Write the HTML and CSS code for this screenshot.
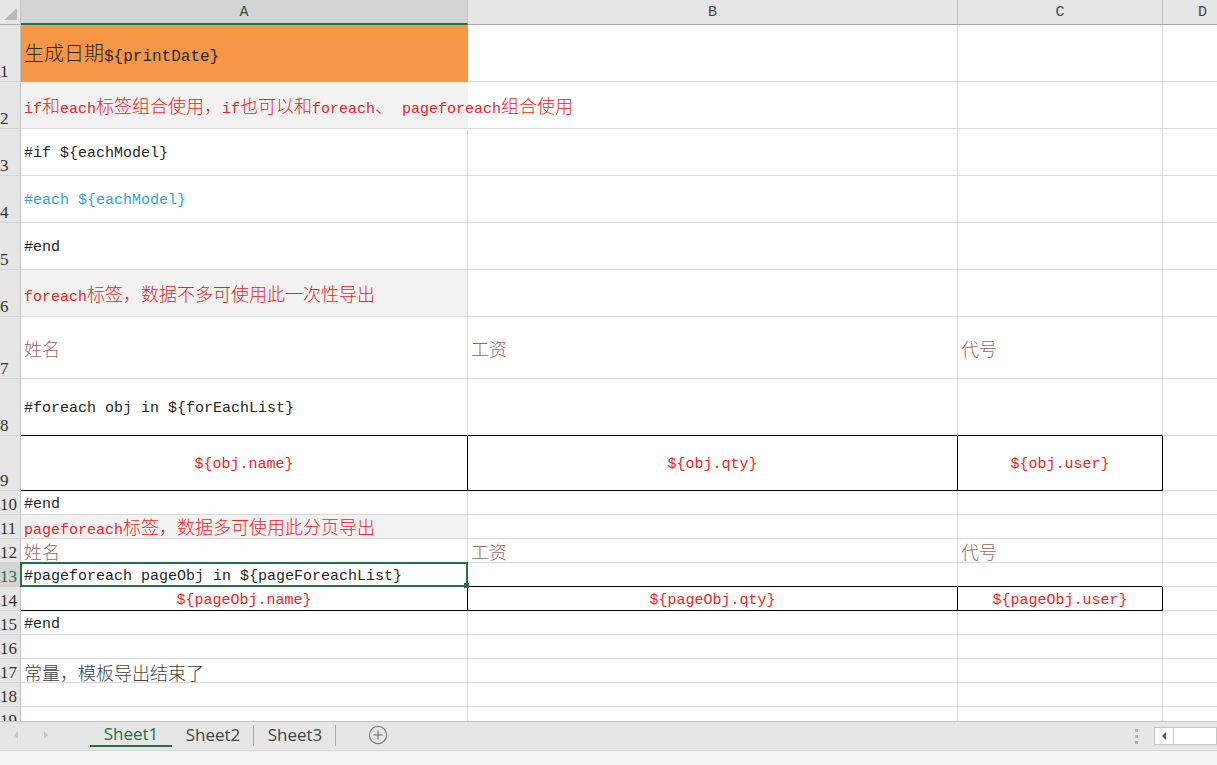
FILE: index.html
```html
<!DOCTYPE html>
<html lang="zh-CN">
<head>
<meta charset="utf-8">
<title>Sheet1</title>
<link rel="stylesheet" href="styles.css">
</head>
<body>
<div class="app">
  <div class="sheet">
    <div class="corner"><svg width="20" height="24" viewBox="0 0 20 24"><polygon points="4,20 17,20 17,8" fill="#b9b9b9"/></svg></div>
    <div class="ch sel">A</div>
    <div class="ch">B</div>
    <div class="ch">C</div>
    <div class="ch">D</div>

    <div class="rh">1</div>
    <div class="c big orange"><span><span class="z">生成日期</span>${printDate}</span></div>
    <div class="c"></div><div class="c"></div><div class="c"></div>

    <div class="rh">2</div>
    <div class="c red gray nor"><span>if<span class="z">和</span>each<span class="z">标签组合使用，</span>if<span class="z">也可以和</span>foreach<span class="z">、</span> pageforeach<span class="z">组合使用</span></span></div>
    <div class="c"></div><div class="c"></div><div class="c"></div>

    <div class="rh">3</div>
    <div class="c"><span>#if ${eachModel}</span></div>
    <div class="c"></div><div class="c"></div><div class="c"></div>

    <div class="rh">4</div>
    <div class="c cyan"><span>#each ${eachModel}</span></div>
    <div class="c"></div><div class="c"></div><div class="c"></div>

    <div class="rh">5</div>
    <div class="c"><span>#end</span></div>
    <div class="c"></div><div class="c"></div><div class="c"></div>

    <div class="rh">6</div>
    <div class="c red gray"><span>foreach<span class="z">标签，数据不多可使用此一次性导出</span></span></div>
    <div class="c"></div><div class="c"></div><div class="c"></div>

    <div class="rh">7</div>
    <div class="c brown"><span class="z">姓名</span></div>
    <div class="c brown"><span class="z">工资</span></div>
    <div class="c brown"><span class="z">代号</span></div>
    <div class="c"></div>

    <div class="rh">8</div>
    <div class="c bb"><span>#foreach obj in ${forEachList}</span></div>
    <div class="c bb"></div><div class="c bb"></div><div class="c"></div>

    <div class="rh">9</div>
    <div class="c bk ctr red"><span>${obj.name}</span></div>
    <div class="c bk ctr red"><span>${obj.qty}</span></div>
    <div class="c bk ctr red"><span>${obj.user}</span></div>
    <div class="c"></div>

    <div class="rh">10</div>
    <div class="c"><span>#end</span></div>
    <div class="c"></div><div class="c"></div><div class="c"></div>

    <div class="rh">11</div>
    <div class="c red gray"><span>pageforeach<span class="z">标签，数据多可使用此分页导出</span></span></div>
    <div class="c"></div><div class="c"></div><div class="c"></div>

    <div class="rh">12</div>
    <div class="c brown"><span class="z">姓名</span></div>
    <div class="c brown"><span class="z">工资</span></div>
    <div class="c brown"><span class="z">代号</span></div>
    <div class="c"></div>

    <div class="rh active">13</div>
    <div class="c bb selcell"><span>#pageforeach pageObj in ${pageForeachList}</span></div>
    <div class="c bb"></div><div class="c bb"></div><div class="c"></div>

    <div class="rh">14</div>
    <div class="c bk ctr red"><span>${pageObj.name}</span></div>
    <div class="c bk ctr red"><span>${pageObj.qty}</span></div>
    <div class="c bk ctr red"><span>${pageObj.user}</span></div>
    <div class="c"></div>

    <div class="rh">15</div>
    <div class="c"><span>#end</span></div>
    <div class="c"></div><div class="c"></div><div class="c"></div>

    <div class="rh">16</div>
    <div class="c"></div>
    <div class="c"></div><div class="c"></div><div class="c"></div>

    <div class="rh">17</div>
    <div class="c dark"><span class="z">常量，模板导出结束了</span></div>
    <div class="c"></div><div class="c"></div><div class="c"></div>

    <div class="rh">18</div>
    <div class="c"></div>
    <div class="c"></div><div class="c"></div><div class="c"></div>

    <div class="rh">19</div>
    <div class="c"></div>
    <div class="c"></div><div class="c"></div><div class="c"></div>
  </div>

  <div class="tabbar">
    <div class="nav">
      <svg width="90" height="27" viewBox="0 0 90 27">
        <polygon points="18,9 14,13 18,17" fill="#c6c6c6"/>
        <polygon points="44,9 48,13 44,17" fill="#c6c6c6"/>
      </svg>
    </div>
    <div class="tabs">
      <div class="tab on">Sheet1</div>
      <div class="tab sep">Sheet2</div>
      <div class="tab sep">Sheet3</div>
    </div>
    <div class="add">
      <svg width="20" height="20" viewBox="0 0 20 20">
        <circle cx="10" cy="10" r="8.6" fill="none" stroke="#7d7d7d" stroke-width="1.2"/>
        <line x1="10" y1="5.5" x2="10" y2="14.5" stroke="#7d7d7d" stroke-width="1.3"/>
        <line x1="5.5" y1="10" x2="14.5" y2="10" stroke="#7d7d7d" stroke-width="1.3"/>
      </svg>
    </div>
    <div class="right">
      <div class="dots"><i></i><i></i><i></i></div>
      <div class="hscroll">
        <div class="sbtn"><svg width="6" height="8" viewBox="0 0 6 8"><polygon points="5,0 1,4 5,8" fill="#5a5a5a"/></svg></div>
        <div class="strack"></div>
      </div>
    </div>
  </div>
  <div class="status"></div>
</div>
</body>
</html>
```

FILE: styles.css
```css
* { box-sizing: border-box; }
html, body { margin: 0; padding: 0; }
body {
  width: 1217px;
  height: 765px;
  overflow: hidden;
  background: #f3f3f3;
  font-family: "Liberation Mono", "Noto Sans CJK SC", monospace;
}
.app {
  display: flex;
  flex-direction: column;
  height: 765px;
}
.sheet {
  flex: none;
  display: grid;
  grid-template-columns: 21px 447px 490px 205px 80px;
  grid-template-rows: 25px 57px repeat(5, 47px) 62px 57px 55px repeat(10, 24px);
  height: 721px;
  width: 1217px;
  overflow: hidden;
  background: #fff;
}
.corner {
  background: #e6e6e6;
  border-right: 1px solid #c4c4c4;
  border-bottom: 1px solid #ababab;
}
.corner svg { display: block; }
.ch {
  background: #e6e6e6;
  border-right: 1px solid #c4c4c4;
  border-bottom: 1px solid #ababab;
  display: flex;
  align-items: center;
  justify-content: center;
  font-size: 15px;
  color: #444;
  padding-top: 1px;
}
.ch.sel {
  background: #d4d4d4;
  border-bottom: 2px solid #217346;
  color: #1f5c3a;
}
.rh {
  background: #e6e6e6;
  border-right: 1px solid #c4c4c4;
  border-bottom: 1px solid #d4d4d4;
  display: flex;
  align-items: flex-end;
  padding-bottom: 0;
  font-family: "Liberation Serif", serif;
  font-size: 17px;
  line-height: 19px;
  color: #333;
  overflow: hidden;
  white-space: nowrap;
}
.rh.active {
  background: #d4d4d4;
  color: #217346;
}
.c {
  border-right: 1px solid #dadada;
  border-bottom: 1px solid #dadada;
  display: flex;
  align-items: center;
  padding-left: 3px;
  padding-top: 4px;
  white-space: pre;
  font-size: 15px;
  line-height: 20px;
  color: #262626;
}
.z {
  font-family: "Noto Sans CJK SC", sans-serif;
  font-size: 18px;
  font-weight: 300;
}
.big { font-size: 16px; color: #2e2a26; }
.big .z { font-size: 20px; }
.orange { background: #f79646; border-right-color: #f79646; border-bottom-color: #f79646; }
.gray { background: #f2f2f2; }
.nor { border-right-color: #f2f2f2; }
.red { color: #ef2424; }
.cyan { color: #2ba7dd; }
.brown { color: #a3665f; padding-top: 1px; }
.dark { color: #404040; padding-top: 2px; }
.ctr { justify-content: center; padding-left: 0; }
.bb { border-bottom-color: #000; }
.bk { border-right-color: #000; border-bottom-color: #000; }
.selcell { position: relative; }
.selcell::after {
  content: "";
  position: absolute;
  left: -1px;
  top: -1px;
  right: -1px;
  bottom: -1px;
  border: 2px solid #217346;
  z-index: 2;
}
.selcell::before {
  content: "";
  position: absolute;
  right: -2px;
  bottom: -2px;
  width: 5px;
  height: 5px;
  background: #217346;
  z-index: 3;
}

.tabbar {
  flex: none;
  height: 30px;
  background: #e6e6e6;
  border-top: 1px solid #c6c6c6;
  border-bottom: 1px solid #d6d6d6;
  display: flex;
  align-items: flex-start;
}
.nav { width: 90px; height: 28px; }
.nav svg { display: block; }
.tabs { display: flex; }
.tab {
  position: relative;
  width: 82px;
  height: 25px;
  display: flex;
  align-items: center;
  justify-content: center;
  font-family: "Open Sans", "Noto Sans", sans-serif;
  font-size: 17px;
  color: #444;
  padding-bottom: 1px;
}
.tab.on {
  color: #217346;
  border-bottom: 2px solid #217346;
  padding-bottom: 0;
}
.tab.sep::after {
  content: "";
  position: absolute;
  right: 0;
  top: 3px;
  bottom: 1px;
  width: 1px;
  background: #a8a8a8;
}
.add { margin-left: 32px; padding-top: 3px; }
.add svg { display: block; }
.right {
  margin-left: auto;
  display: flex;
  align-items: flex-start;
  padding-top: 5px;
}
.dots {
  display: flex;
  flex-direction: column;
  gap: 3px;
  padding-top: 2px;
  margin-right: 16px;
}
.dots i {
  display: block;
  width: 3px;
  height: 3px;
  background: #b0b0b0;
}
.hscroll {
  display: flex;
  width: 63px;
  height: 18px;
  border: 1px solid #c6c6c6;
  background: #fff;
}
.sbtn {
  width: 19px;
  border-right: 1px solid #c6c6c6;
  display: flex;
  align-items: center;
  justify-content: center;
  background: #fafafa;
}
.sbtn svg { display: block; }
.strack { flex: 1; background: #fff; }
.status { flex: 1; background: #f3f3f3; }
```
